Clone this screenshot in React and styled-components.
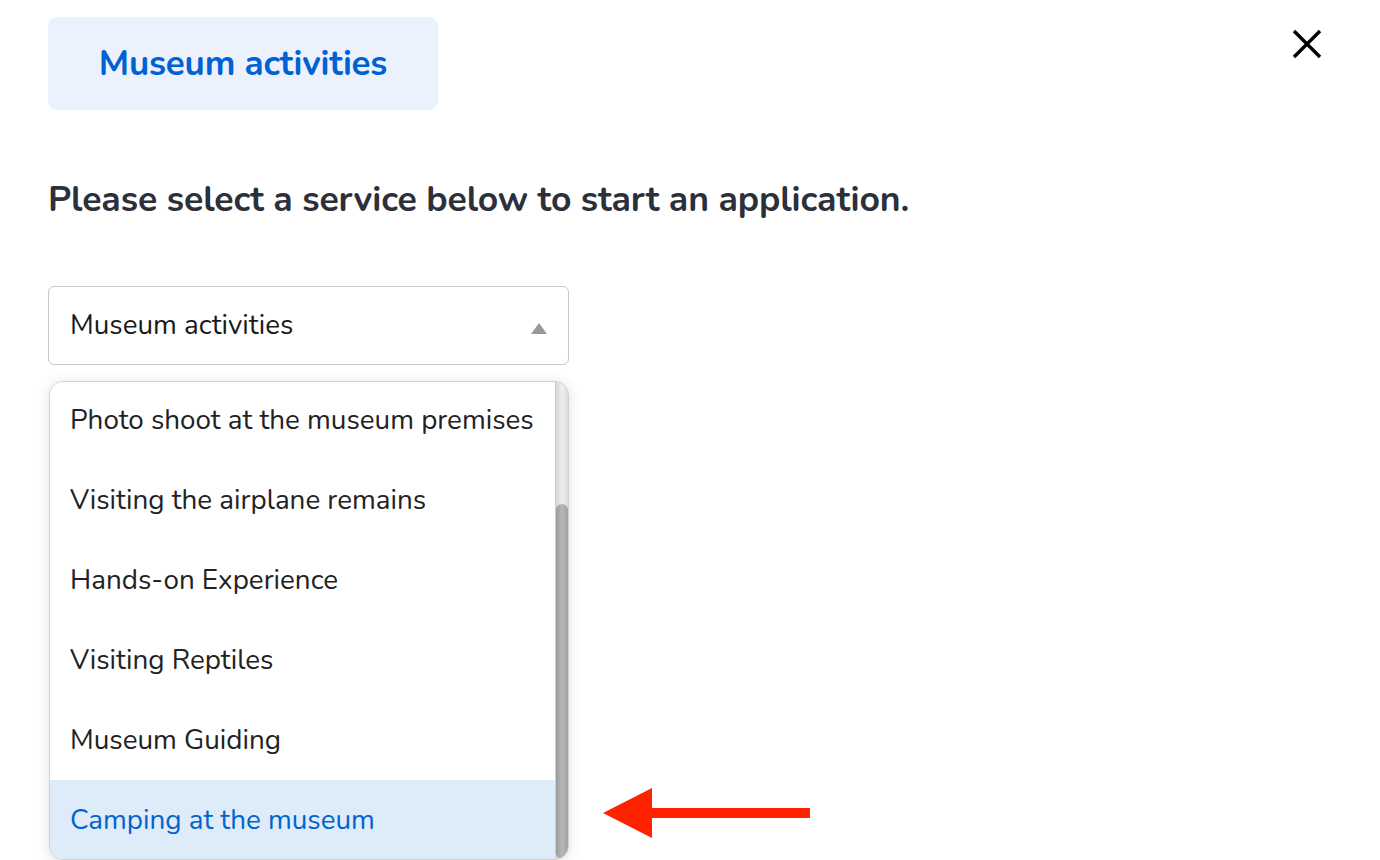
import React from "react";
import styled, { createGlobalStyle } from "styled-components";

const Global = createGlobalStyle`
  html, body { margin: 0; padding: 0; background: #fff; overflow: hidden; }
  body { font-family: "Nunito", "Open Sans", "Noto Sans", sans-serif; }
  * { box-sizing: border-box; }
`;

const Page = styled.div`
  width: 1380px;
  height: 860px;
  padding: 17px 48px 0 48px;
  display: flex;
  flex-direction: column;
  position: relative;
`;

const TopRow = styled.div`
  display: flex;
  justify-content: space-between;
  align-items: flex-start;
`;

const Tag = styled.div`
  width: 390px;
  height: 93px;
  border-radius: 9px;
  background: #ebf2fd;
  color: #0062d2;
  font-weight: 700;
  font-size: 35px;
  display: flex;
  align-items: center;
  justify-content: center;
  letter-spacing: -0.2px;
`;

const Close = styled.button`
  border: 0;
  background: none;
  padding: 0;
  margin: 9px 7px 0 0;
  width: 36px;
  height: 36px;
  display: flex;
  align-items: center;
  justify-content: center;
`;

const Heading = styled.h2`
  margin: 68px 0 0 0;
  font-size: 35.6px;
  font-weight: 700;
  color: #2b303a;
  line-height: 44px;
  letter-spacing: -0.1px;
  white-space: nowrap;
`;

const Select = styled.div`
  margin-top: 64px;
  width: 521px;
  height: 79px;
  border: 1px solid #c8c8c8;
  border-radius: 6px;
  display: flex;
  align-items: center;
  justify-content: space-between;
  padding: 0 21px 0 21px;
  font-size: 27.8px;
  color: #1a1a1a;
`;

const Caret = styled.span`
  width: 0;
  height: 0;
  border-left: 8px solid transparent;
  border-right: 8px solid transparent;
  border-bottom: 11px solid #999;
  margin-top: 6px;
`;

const Menu = styled.div`
  margin-top: 16px;
  width: 520px;
  height: 480px;
  margin-left: 1px;
  border: 1px solid #cfcfcf;
  border-radius: 14px;
  box-shadow: 0 2px 14px rgba(0, 0, 0, 0.12);
  background: #fff;
  display: flex;
  overflow: hidden;
`;

const Items = styled.div`
  flex: 1;
  display: flex;
  flex-direction: column;
  margin-top: -2px;
`;

const Item = styled.div`
  height: 80px;
  flex: 0 0 80px;
  display: flex;
  align-items: center;
  padding-left: 20px;
  font-size: 27.8px;
  color: ${(p) => (p.$active ? "#0064cf" : "#222")};
  background: ${(p) => (p.$active ? "#deebf8" : "#fff")};
  white-space: nowrap;
`;

const Track = styled.div`
  width: 13px;
  flex: 0 0 13px;
  background: linear-gradient(to right, #d6d6d6, #efefef 50%, #dcdcdc);
  display: flex;
  flex-direction: column;
  border-left: 1px solid #cfcfcf;
`;

const Thumb = styled.div`
  margin-top: 122px;
  flex: 1;
  border-radius: 7px;
  background: linear-gradient(to right, #9a9a9a, #b8b8b8 50%, #a0a0a0);
`;

const Arrow = styled.svg`
  position: absolute;
  left: 600px;
  top: 786px;
`;

const items = [
  "Photo shoot at the museum premises",
  "Visiting the airplane remains",
  "Hands-on Experience",
  "Visiting Reptiles",
  "Museum Guiding",
  "Camping at the museum",
];

export default function App() {
  return (
    <>
      <Global />
      <Page>
        <TopRow>
          <Tag>Museum activities</Tag>
          <Close aria-label="close">
            <svg width="30" height="30" viewBox="0 0 30 30">
              <path d="M2 2 L28 28 M28 2 L2 28" stroke="#000" strokeWidth="3.4" fill="none" />
            </svg>
          </Close>
        </TopRow>
        <Heading>Please select a service below to start an application.</Heading>
        <Select>
          <span>Museum activities</span>
          <Caret />
        </Select>
        <Menu>
          <Items>
            {items.map((t, i) => (
              <Item key={t} $active={i === items.length - 1}>
                {t}
              </Item>
            ))}
          </Items>
          <Track>
            <Thumb />
          </Track>
        </Menu>
        <Arrow width="212" height="54" viewBox="0 0 212 54">
          <polygon points="3,27 52,2 52,52" fill="#ff2200" />
          <rect x="50" y="22" width="160" height="10" fill="#ff2200" />
        </Arrow>
      </Page>
    </>
  );
}
